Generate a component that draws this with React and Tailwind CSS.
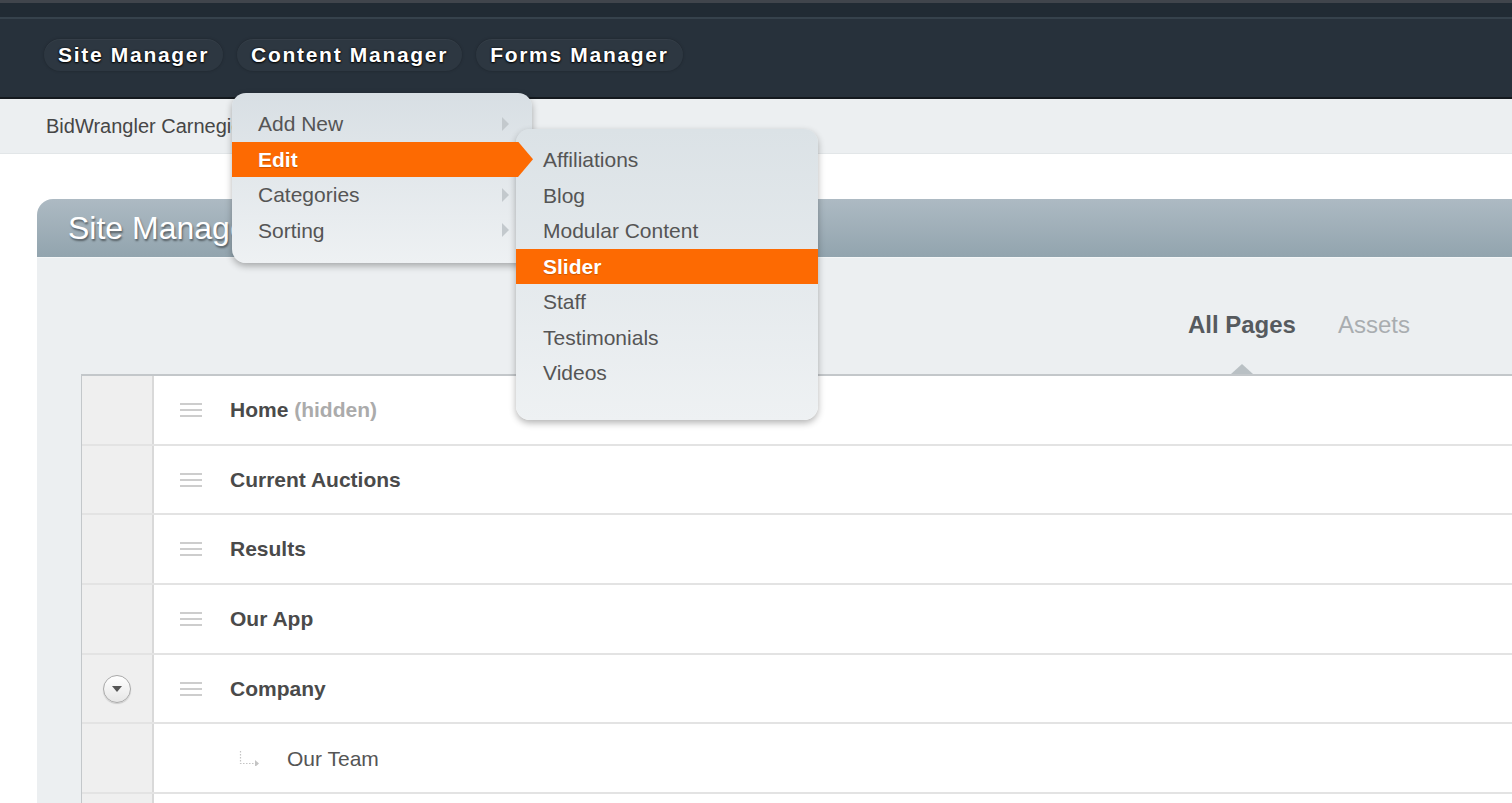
import React from "react";

const FONT = { fontFamily: '"Liberation Sans", Arial, Helvetica, sans-serif' };

function NavPill({ children }) {
  return (
    <div className="h-[32px] px-[14px] flex items-center rounded-full bg-[#2d3741] shadow-[inset_0_1px_0_rgba(255,255,255,0.04),0_0_3px_rgba(0,0,0,0.25)]">
      <span className="text-[21px] font-bold tracking-[1.7px] text-white [text-shadow:0_1px_2px_#000,0_0_2px_#000]">
        {children}
      </span>
    </div>
  );
}

function Grip() {
  return (
    <svg width="22" height="14" viewBox="0 0 22 14" className="shrink-0">
      <g stroke="#bdbdbd" strokeWidth="1.5">
        <line x1="0" y1="1" x2="22" y2="1" />
        <line x1="0" y1="7" x2="22" y2="7" />
        <line x1="0" y1="13" x2="22" y2="13" />
      </g>
    </svg>
  );
}

function ChildArrow() {
  return (
    <svg width="22" height="16" viewBox="0 0 22 16" className="shrink-0">
      <path d="M1.5 1 V13.5 H15" fill="none" stroke="#c4c4c4" strokeWidth="1.2" strokeDasharray="1.5 1.5" />
      <path d="M16 10 L20 13.5 L16 17 Z" fill="#c4c4c4" />
    </svg>
  );
}

function Toggle() {
  return (
    <div className="w-[28px] h-[28px] rounded-full border border-[#a9a9a9] bg-gradient-to-b from-white to-[#e6e6e6] shadow-[0_1px_1px_rgba(0,0,0,0.15)] flex items-center justify-center">
      <svg width="12" height="8" viewBox="0 0 12 8">
        <path d="M1 1 H11 L6 7 Z" fill="#555" />
      </svg>
    </div>
  );
}

function Row({ children, toggle }) {
  return (
    <div className="flex h-[69.7px] border-b-2 border-[#e3e3e3]">
      <div className="w-[72px] shrink-0 bg-[#efefef] border-r-2 border-[#d9d9d9] flex items-center justify-center">
        {toggle ? <Toggle /> : null}
      </div>
      <div className="flex-1 bg-white flex items-center">{children}</div>
    </div>
  );
}

function PageRow({ title, note, toggle }) {
  return (
    <Row toggle={toggle}>
      <div className="flex items-center pl-[26px] gap-[28px]">
        <Grip />
        <span className="text-[21px] font-bold text-[#4a4a4a]">
          {title}
          {note ? <span className="text-[#ababab]"> {note}</span> : null}
        </span>
      </div>
    </Row>
  );
}

function SubArrow() {
  return (
    <svg width="8" height="14" viewBox="0 0 8 14">
      <path d="M0 0 L7 7 L0 14 Z" fill="#c3c9cd" />
    </svg>
  );
}

function MenuItem({ label, sub }) {
  return (
    <div className="h-[35.5px] flex items-center justify-between pl-[26px] pr-[22px] text-[21px] text-[#555]">
      <span>{label}</span>
      {sub ? <SubArrow /> : null}
    </div>
  );
}

export default function App() {
  return (
    <div className="relative w-[1512px] h-[803px] overflow-hidden bg-white" style={FONT}>
      {/* top chrome */}
      <div className="h-[3px] bg-[#40454c]" />
      <div className="h-[14px] bg-[#212b34]" />
      <div className="h-[2px] bg-[#36424c]" />
      <div className="h-[80px] bg-[#27313b] border-b-2 border-[#14191e] flex items-center gap-[14px] pl-[44px] pb-[7px]">
        <NavPill>Site Manager</NavPill>
        <NavPill>Content Manager</NavPill>
        <NavPill>Forms Manager</NavPill>
      </div>

      {/* breadcrumb */}
      <div className="h-[55px] bg-[#eceff1] border-b border-[#e2e6e8] flex items-center pl-[46px]">
        <span className="text-[20px] text-[#464646]">BidWrangler Carnegie</span>
      </div>

      {/* panel */}
      <div className="mt-[45px] ml-[37px] w-[1520px]">
        <div className="h-[59px] rounded-tl-[16px] bg-gradient-to-b from-[#adbac3] to-[#92a4ae] border-b border-[#f4f6f7] flex items-center pl-[31px]">
          <span className="text-[32px] text-white [text-shadow:1px_2px_2px_rgba(0,0,0,0.45)]">Site Manager</span>
        </div>
        <div className="bg-[#eceff1]">
          <div className="h-[116px] flex justify-end pr-[147px] pt-[43px] gap-[42px]">
            <div className="relative h-[48px] flex items-center">
              <span className="text-[24px] font-bold text-[#565a5e]">All Pages</span>
              <div className="absolute left-1/2 -translate-x-1/2 bottom-[-25px] w-0 h-0 border-l-[11px] border-r-[11px] border-b-[10px] border-l-transparent border-r-transparent border-b-[#b9c0c4]" />
            </div>
            <div className="h-[48px] flex items-center">
              <span className="text-[24px] text-[#a9adb0]">Assets</span>
            </div>
          </div>
          <div className="ml-[44px] border-t-2 border-l border-[#c3c7ca]">
            <PageRow title="Home" note="(hidden)" />
            <PageRow title="Current Auctions" />
            <PageRow title="Results" />
            <PageRow title="Our App" />
            <PageRow title="Company" toggle />
            <Row>
              <div className="flex items-center pl-[85px] gap-[26px]">
                <ChildArrow />
                <span className="text-[21px] text-[#555]">Our Team</span>
              </div>
            </Row>
            <Row />
          </div>
        </div>
      </div>

      {/* content manager dropdown */}
      <div className="absolute left-[232px] top-[93px] w-[300px] h-[170px] rounded-[14px] bg-gradient-to-b from-[#d8dfe4] to-[#eef1f3] shadow-[0_3px_7px_rgba(0,0,0,0.3)] pt-[13px]">
        <MenuItem label="Add New" sub />
        <div className="relative z-30 h-[35.5px] w-[301px]">
          <div className="absolute inset-0 bg-[#fd6a02] [clip-path:polygon(0_0,286px_0,301px_50%,286px_100%,0_100%)]" />
          <div className="relative h-full flex items-center pl-[26px] text-[21px] font-bold text-white [text-shadow:0_1px_1px_rgba(0,0,0,0.2)]">
            Edit
          </div>
        </div>
        <MenuItem label="Categories" sub />
        <MenuItem label="Sorting" sub />
      </div>

      {/* edit submenu */}
      <div className="absolute z-20 left-[516px] top-[129px] w-[302px] h-[291px] rounded-[14px] bg-gradient-to-b from-[#dbe2e6] to-[#eef1f3] shadow-[0_3px_7px_rgba(0,0,0,0.3)] pt-[13px]">
        {["Affiliations", "Blog", "Modular Content"].map((l) => (
          <div key={l} className="h-[35.5px] flex items-center pl-[27px] text-[21px] text-[#555]">{l}</div>
        ))}
        <div className="h-[35.5px] flex items-center pl-[27px] text-[21px] font-bold text-white bg-[#fd6a02] [text-shadow:0_1px_1px_rgba(0,0,0,0.2)]">
          Slider
        </div>
        {["Staff", "Testimonials", "Videos"].map((l) => (
          <div key={l} className="h-[35.5px] flex items-center pl-[27px] text-[21px] text-[#555]">{l}</div>
        ))}
      </div>
    </div>
  );
}
